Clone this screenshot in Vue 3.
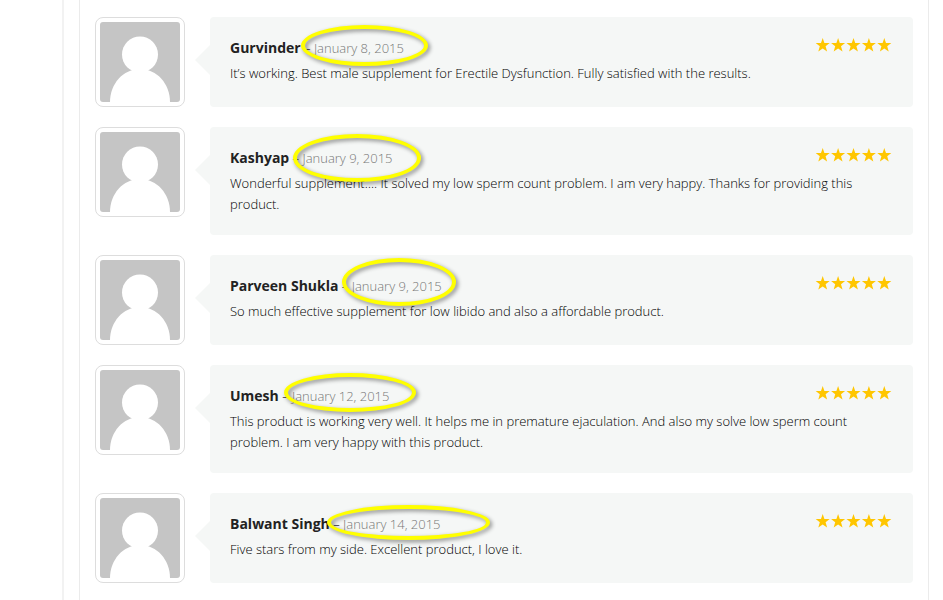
<script setup>
const reviews = [
  { name: 'Gurvinder', date: 'January 8, 2015', text: 'It’s working. Best male supplement for Erectile Dysfunction. Fully satisfied with the results.', mark: { left: 91, top: 8, width: 127, height: 41 } },
  { name: 'Kashyap', date: 'January 9, 2015', text: 'Wonderful supplement…. It solved my low sperm count problem. I am very happy. Thanks for providing this product.', mark: { left: 83, top: 7, width: 128, height: 48 } },
  { name: 'Parveen Shukla', date: 'January 9, 2015', text: 'So much effective supplement for low libido and also a affordable product.', mark: { left: 132, top: 3, width: 114, height: 48 } },
  { name: 'Umesh', date: 'January 12, 2015', text: 'This product is working very well. It helps me in premature ejaculation. And also my solve low sperm count problem. I am very happy with this product.', mark: { left: 74, top: 8, width: 132, height: 39 } },
  { name: 'Balwant Singh', date: 'January 14, 2015', text: 'Five stars from my side. Excellent product, I love it.', mark: { left: 117, top: 12, width: 163, height: 35 } },
]

const markStyle = (m) => ({
  left: `${m.left}px`,
  top: `${m.top}px`,
  width: `${m.width}px`,
  height: `${m.height}px`,
})
</script>

<template>
  <div class="page">
    <main class="panel">
      <ol class="reviews">
        <li v-for="review in reviews" :key="review.name" class="review">
          <div class="avatar">
            <svg viewBox="0 0 80 80" aria-hidden="true">
              <rect width="80" height="80" fill="#c5c5c5" />
              <circle cx="40" cy="32.5" r="18" fill="#fff" />
              <path d="M10 80C10 62 23 47 40 47S70 62 70 80Z" fill="#fff" />
            </svg>
          </div>
          <article class="card">
            <header class="meta">
              <div>
                <strong class="name">{{ review.name }}</strong>
                –
                <time class="date">{{ review.date }}</time>
              </div>
              <div class="stars" role="img" aria-label="5 out of 5">
                <svg viewBox="0 0 76 14" aria-hidden="true">
                  <path
                    v-for="n in 5"
                    :key="n"
                    :transform="`translate(${(n - 1) * 15.4} 0)`"
                    d="M6.7 0L8.4 4.9L13.7 5.1L9.6 8.3L11.1 13.4L6.7 10.5L2.3 13.4L3.8 8.3L-.3 5.1L5 4.9Z"
                    fill="#ffc600"
                  />
                </svg>
              </div>
            </header>
            <p class="text">{{ review.text }}</p>
            <span class="mark" :style="markStyle(review.mark)"></span>
          </article>
        </li>
      </ol>
    </main>
  </div>
</template>

<style>
body {
  margin: 0;
  background: #fff;
}
</style>

<style scoped>
.page {
  box-sizing: border-box;
  min-height: 100vh;
  display: flex;
  margin-left: 62px;
  padding: 0 14px 0 15px;
  border-left: 2px solid #f2f2f2;
  font-family: "Open Sans", "Noto Sans", sans-serif;
  font-size: 13px;
  font-weight: 300;
  line-height: 21px;
  color: #000;
}
.panel {
  flex: 1;
  padding: 17px 15px;
  border-left: 1px solid #ebebeb;
  border-right: 1px solid #ebebeb;
}
.reviews {
  display: flex;
  flex-direction: column;
  gap: 20px;
  margin: 0;
  padding: 0;
  list-style: none;
}
.review {
  display: flex;
  align-items: stretch;
  gap: 25px;
}
.avatar {
  box-sizing: border-box;
  flex: none;
  align-self: flex-start;
  width: 90px;
  height: 90px;
  padding: 4px;
  border: 1px solid #ddd;
  border-radius: 8px;
}
.avatar svg {
  display: block;
  width: 80px;
  height: 80px;
  border-radius: 3px;
}
.card {
  position: relative;
  flex: 1;
  min-width: 0;
  padding: 20px;
  border-radius: 4px;
  background: #f5f7f6;
}
.card::before {
  content: "";
  position: absolute;
  left: -15px;
  top: 28px;
  width: 15px;
  height: 30px;
  background: #f5f7f6;
  clip-path: polygon(100% 0, 0 50%, 100% 100%);
}
.meta {
  display: flex;
  justify-content: space-between;
  margin-bottom: 4px;
}
.name {
  font-size: 14px;
  font-weight: 700;
  color: #222;
}
.date {
  color: #777;
}
.stars {
  padding: 1px 1px 0 0;
}
.stars svg {
  display: block;
  width: 76px;
  height: 14px;
  overflow: visible;
}
.text {
  margin: 0;
}
.mark {
  position: absolute;
  box-sizing: border-box;
  border: 4px solid #ff0;
  border-radius: 50%;
  filter: drop-shadow(2px 2px 2px rgba(0, 0, 0, 0.45));
  pointer-events: none;
}
</style>
